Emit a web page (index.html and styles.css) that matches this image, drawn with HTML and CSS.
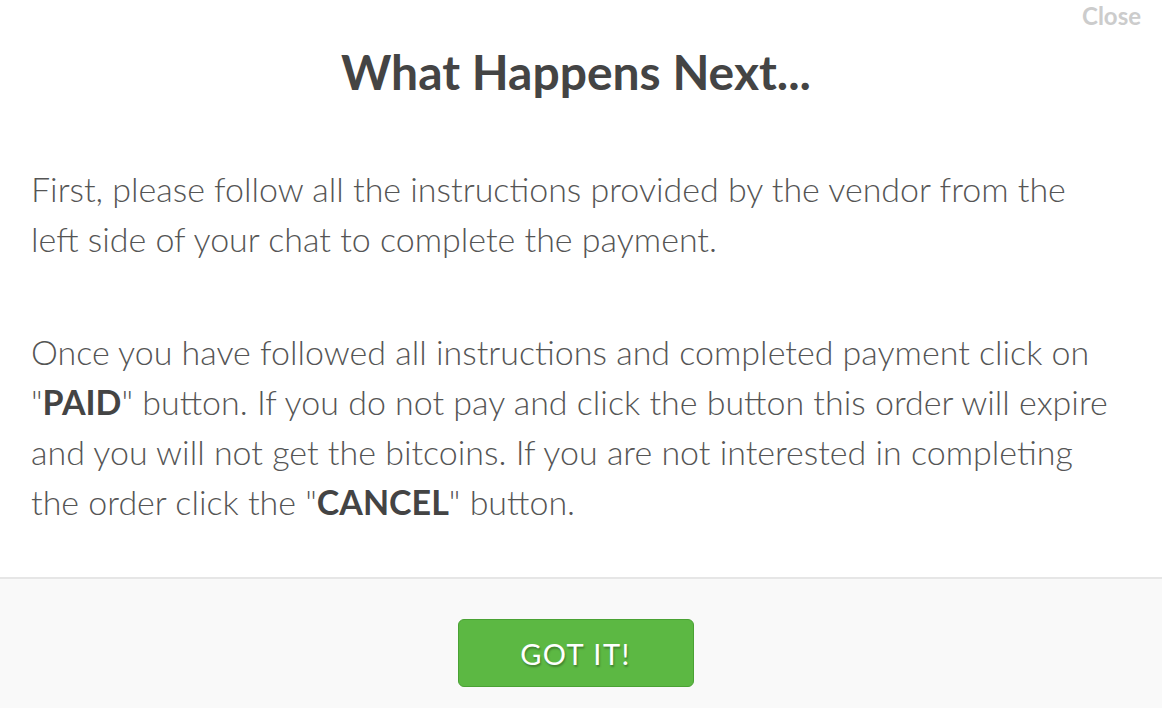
FILE: index.html
```html
<!DOCTYPE html>
<html>
<head>
<meta charset="utf-8">
<link rel="stylesheet" href="styles.css">
</head>
<body>
<div class="modal">
  <a class="close">Close</a>
  <div class="content">
    <h1 class="title">What Happens Next...</h1>
    <p class="para first">First, please follow all the instructions provided by the vendor from the left side of your chat to complete the payment.</p>
    <p class="para">Once you have followed all instructions and completed payment click on "<b>PAID</b>" button. If you do not pay and click the button this order will expire and you will not get the bitcoins. If you are not interested in completing the order click the "<b>CANCEL</b>" button.</p>
  </div>
  <div class="footer">
    <button class="btn">GOT IT!</button>
  </div>
</div>
</body>
</html>
```
FILE: styles.css
```css
html, body {
  margin: 0;
  padding: 0;
  background: #fff;
}
body {
  font-family: Lato, "Open Sans", sans-serif;
  width: 1162px;
  height: 708px;
  overflow: hidden;
}
.modal {
  position: relative;
  display: flex;
  flex-direction: column;
  height: 708px;
}
.close {
  position: absolute;
  top: 2px;
  right: 21px;
  font-size: 24px;
  font-weight: 700;
  color: #cccccc;
  line-height: 28px;
}
.content {
  padding: 43px 47px 0 31px;
  height: 534px;
  border-bottom: 2px solid #e6e6e6;
}
.title {
  margin: 0 0 63px 6px;
  text-align: center;
  font-size: 48px;
  line-height: 58px;
  font-weight: 700;
  color: #444444;
}
.para {
  margin: 0;
  font-size: 34px;
  line-height: 50px;
  font-weight: 300;
  color: #555555;
}
.para.first {
  margin-bottom: 63px;
}
.para b {
  font-weight: 700;
  color: #444444;
}
.footer {
  flex: 1;
  background: #f9f9f9;
  display: flex;
  justify-content: center;
  align-items: flex-start;
  padding: 40px 11px 0 0;
}
.btn {
  width: 236px;
  height: 68px;
  background: #5cb843;
  border: 1px solid #4aa234;
  border-radius: 6px;
  color: #fff;
  font-family: Lato, sans-serif;
  font-size: 29px;
  font-weight: 400;
  letter-spacing: 1.5px;
  text-shadow: 1px 2px 2px rgba(0,0,0,0.3);
  padding: 0;
}
```
